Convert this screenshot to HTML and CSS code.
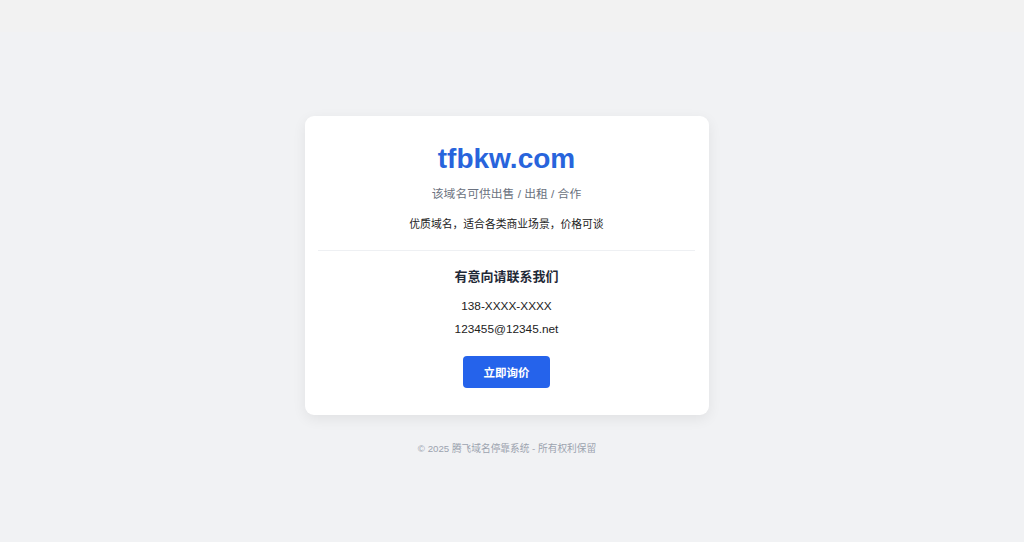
FILE: index.html
```html
<!DOCTYPE html>
<html lang="zh-CN">
<head>
<meta charset="utf-8">
<title>tfbkw.com</title>
<link rel="stylesheet" href="styles.css">
</head>
<body>
<div class="topband"></div>
<main class="page">
  <section class="card">
    <h1 class="domain">tfbkw.com</h1>
    <p class="subtitle">该域名可供出售 / 出租 / 合作</p>
    <p class="desc">优质域名，适合各类商业场景，价格可谈</p>
    <hr class="divider">
    <h2 class="contact-title">有意向请联系我们</h2>
    <p class="contact-line phone">138-XXXX-XXXX</p>
    <p class="contact-line email">123455@12345.net</p>
    <a class="btn" href="#">立即询价</a>
  </section>
  <footer class="footer">© 2025 腾飞域名停靠系统 - 所有权利保留</footer>
</main>
</body>
</html>
```
FILE: styles.css
```css
html, body {
  margin: 0;
  padding: 0;
}
body {
  background: #f1f2f4;
  font-family: "Liberation Sans", Arial, "Noto Sans CJK SC", sans-serif;
  height: 542px;
  overflow: hidden;
}
.topband {
  height: 32px;
  background: #f2f2f2;
}
.page {
  display: flex;
  flex-direction: column;
  align-items: center;
  padding-top: 84px;
  padding-right: 10px;
}
.card {
  width: 404px;
  box-sizing: border-box;
  background: #ffffff;
  border-radius: 9px;
  box-shadow: 0 4px 14px rgba(0, 0, 0, 0.07);
  padding: 26px 14px 27px 13px;
  display: flex;
  flex-direction: column;
  align-items: center;
  text-align: center;
}
.domain {
  margin: 0;
  font-size: 28px;
  line-height: 34px;
  font-weight: 700;
  color: #2864dc;
}
.subtitle {
  margin: 9.5px 0 0;
  font-size: 11.8px;
  line-height: 16px;
  color: #6b7280;
}
.desc {
  margin: 14px 0 0;
  font-size: 10.8px;
  line-height: 16px;
  color: #222;
}
.divider {
  align-self: stretch;
  margin: 18.5px 0 0;
  border: 0;
  height: 1px;
  background: #eef0f3;
}
.contact-title {
  margin: 17px 0 0;
  font-size: 13px;
  line-height: 18px;
  font-weight: 700;
  color: #1f2937;
}
.contact-line {
  margin: 0;
  font-size: 11.8px;
  line-height: 16px;
  color: #222;
}
.phone {
  margin-top: 12px;
}
.email {
  margin-top: 7px;
}
.btn {
  margin-top: 19px;
  width: 87px;
  height: 32px;
  box-sizing: border-box;
  display: flex;
  align-items: center;
  justify-content: center;
  background: #2563eb;
  color: #ffffff;
  border-radius: 4px;
  font-size: 11.5px;
  font-weight: 700;
  text-decoration: none;
}
.footer {
  margin-top: 27px;
  font-size: 9.7px;
  line-height: 14px;
  color: #9ca3af;
}
```
